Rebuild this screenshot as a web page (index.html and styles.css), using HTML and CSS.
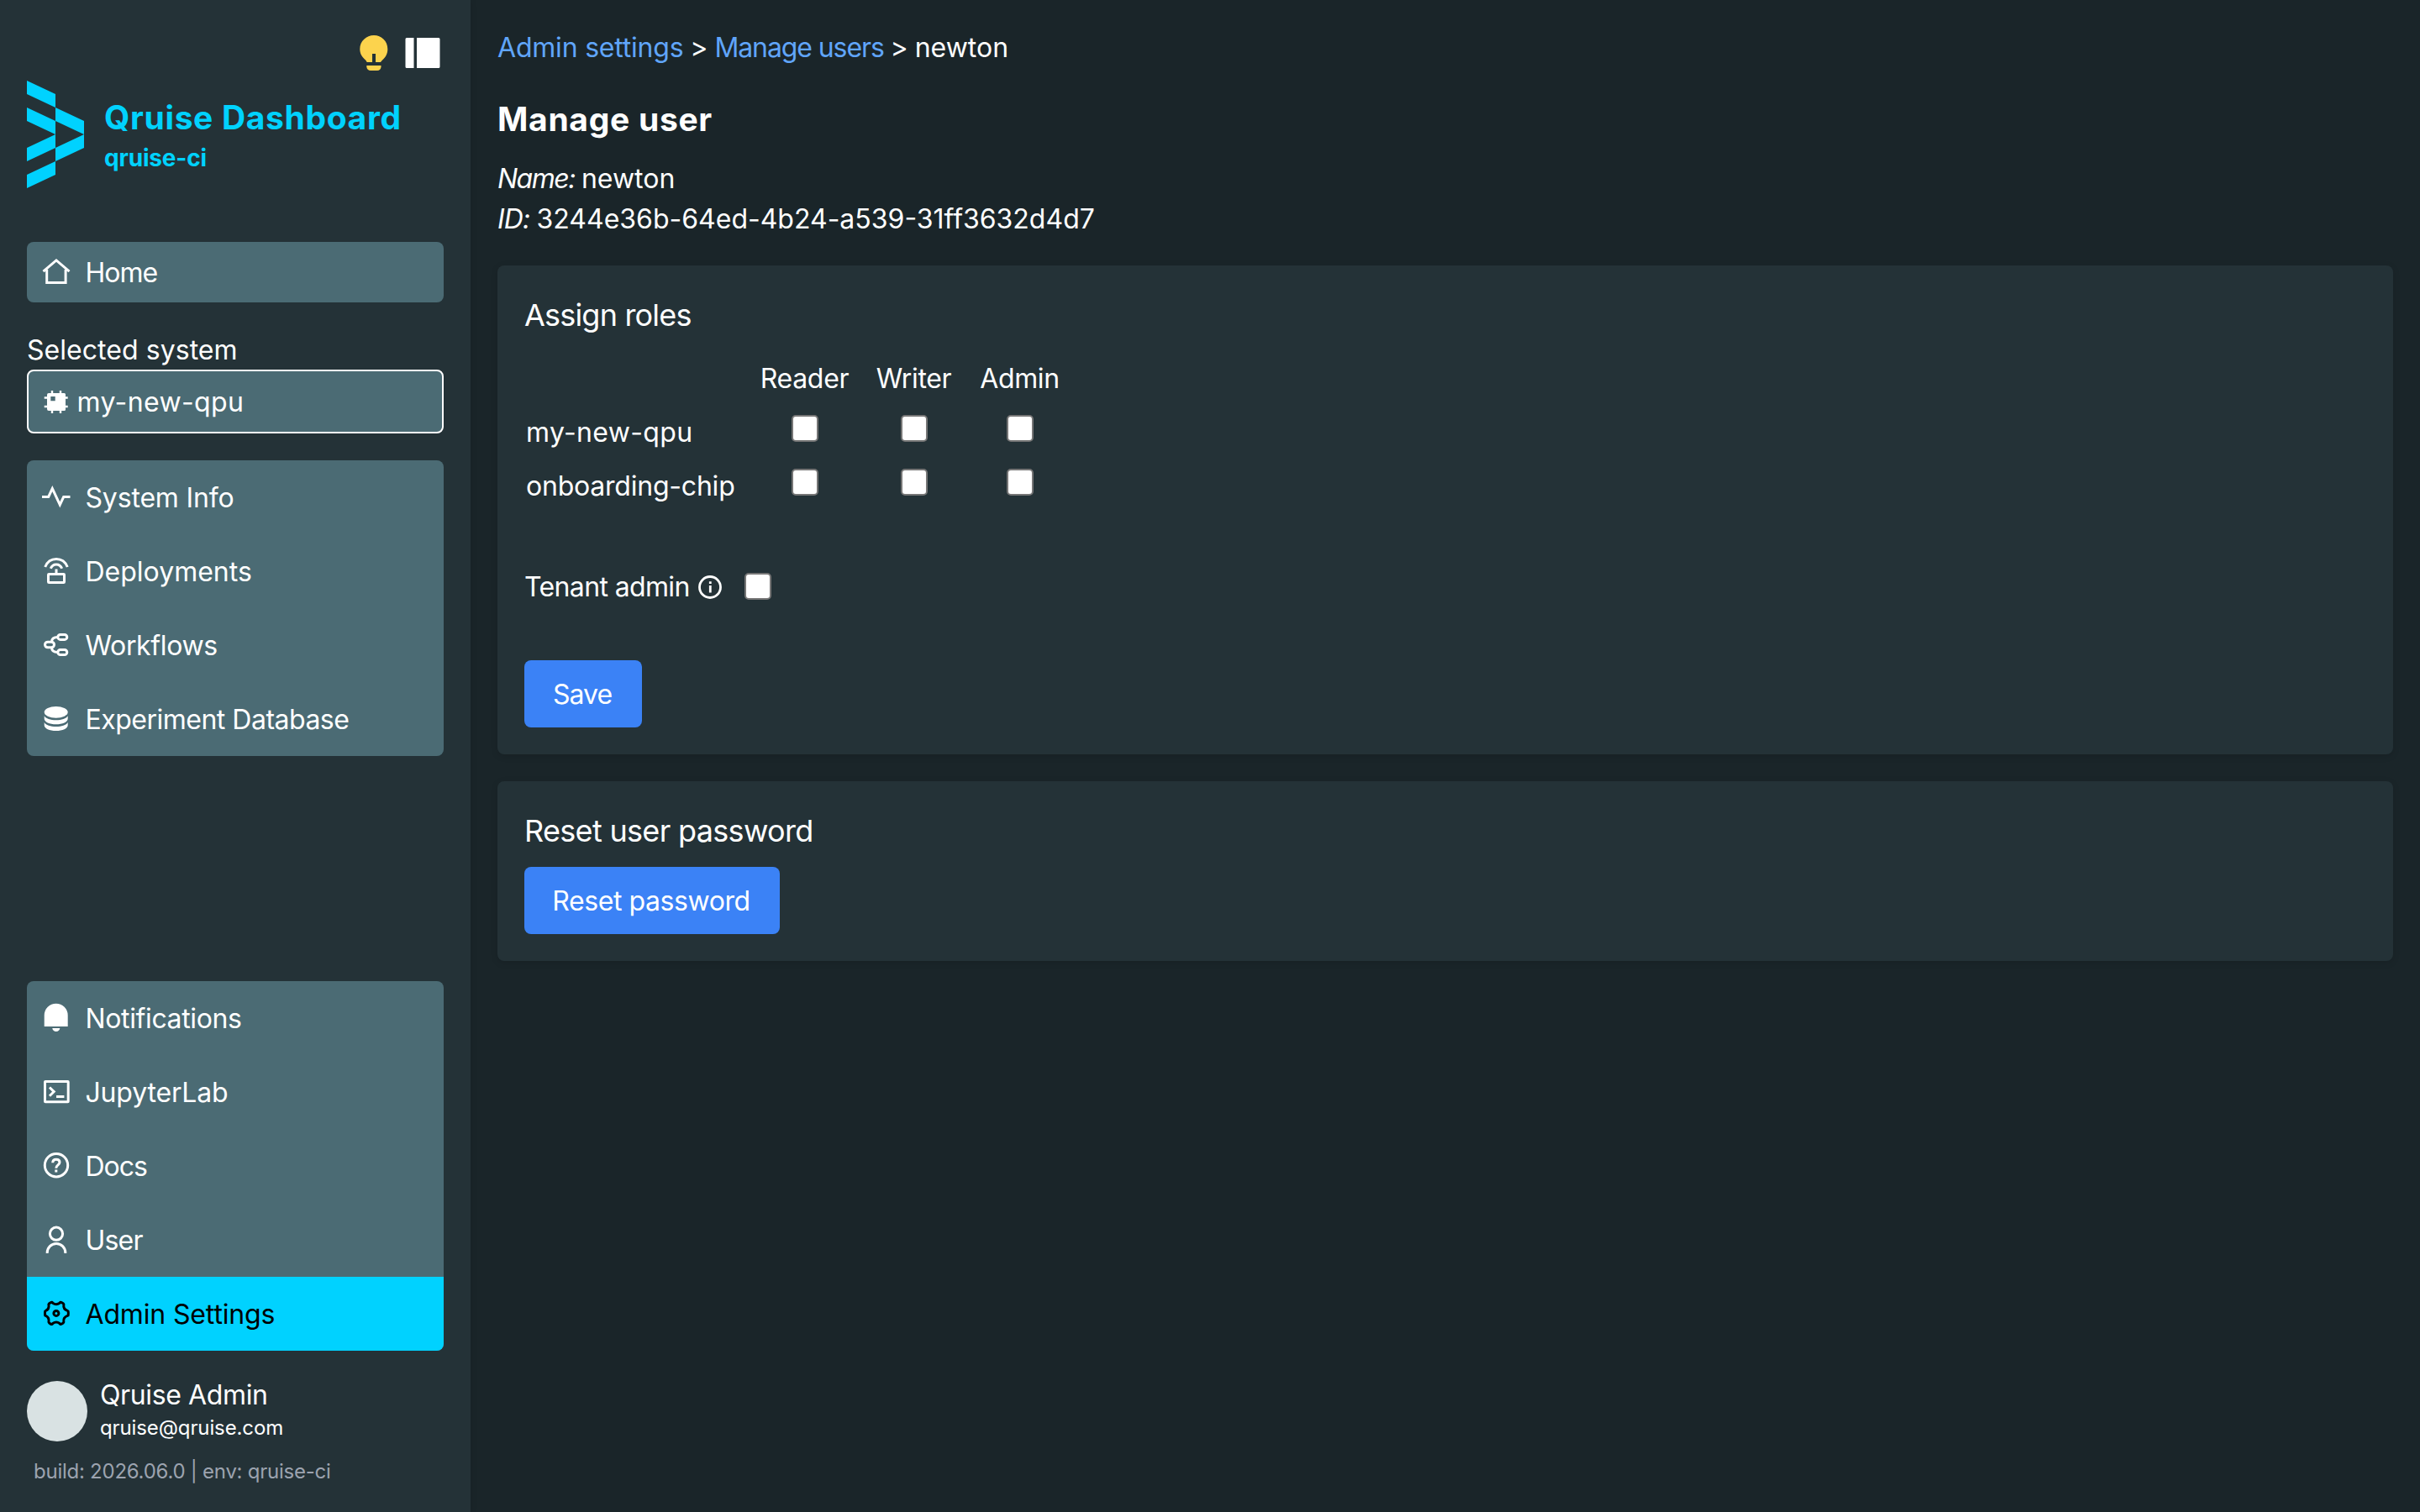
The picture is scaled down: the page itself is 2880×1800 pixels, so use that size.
FILE: index.html
```html
<!DOCTYPE html>
<html lang="en">
<head>
<meta charset="utf-8">
<title>Qruise Dashboard</title>
<link rel="stylesheet" href="styles.css">
</head>
<body>
<div class="app">
  <aside class="sidebar">
    <div class="tools">
      <svg class="bulb" viewBox="0 0 34 42"><path fill-rule="evenodd" d="M17 0C26 0 33.3 7 33.3 16.4c0 6.5-3 9.800-6 12.800-1.200 1.200-2.300 2.800-2.300 2.800H19V22h-4v10H8.600s-.6-1.600-1.800-2.800C3.800 26.200.300 23 .300 16.400.3 7 8 0 17 0zM8.300 36h17.200v1.500a4.500 4.500 0 0 1-4.500 4.500h-8a4.700 4.700 0 0 1-4.700-4.500z"/></svg>
      <svg class="panel" viewBox="0 0 42 36"><path d="M2 0h8.500v36H2a1.500 1.500 0 0 1-1.500-1.500v-33A1.500 1.500 0 0 1 2 0zM14 0h26a1.500 1.500 0 0 1 1.500 1.500v33A1.500 1.500 0 0 1 40 36H14z"/></svg>
    </div>
    <div class="brand">
      <svg class="logo" viewBox="0 0 68 128"><path d="M0 0l34 16v16L0 16zM0 32l34 16v16L0 48zM34 32l34 16v16L34 48zM34 64v16L0 96V80zM68 64v16L34 96V80zM34 96v16L0 128v-16z"/></svg>
      <div class="brand-text">
        <div class="brand-name">Qruise Dashboard</div>
        <div class="brand-env">qruise-ci</div>
      </div>
    </div>

    <a class="nav home">
      <span class="item"><svg class="icon" viewBox="0 0 36 36"><path d="M2.500 17.200L18 3.900l15.500 13.300M6.700 15v15.600h22.400V15"/></svg><span class="t-short">Home</span></span>
    </a>

    <div class="select-label">Selected system</div>
    <div class="select">
      <svg class="icon" viewBox="0 0 36 36"><path class="solid" fill-rule="evenodd" d="M9 8h18.500a1.500 1.500 0 0 1 1.500 1.500V27.500a1.500 1.500 0 0 1-1.500 1.500H9a2 2 0 0 1-2-2V10a2 2 0 0 1 2-2zM11.300 12v5.300h5.400V12z"/><path class="pins" d="M13 5v4M23 5v4M13 28v4M23 28v4M3.700 13.500H8M3.700 24H8M28 13.500h3.700M28 24h3.700"/></svg>
      <span>my-new-qpu</span>
    </div>

    <nav class="nav">
      <a class="item"><svg class="icon" viewBox="0 0 36 36"><path d="M1 17.500h7.700l4.600-10L22.300 27l4.400-9.500h7.800"/></svg><span class="t-info">System Info</span></a>
      <a class="item"><svg class="icon" viewBox="0 0 36 36"><path d="M4.700 13C7.200 7 12.200 3.600 18 3.600S28.800 7 31.300 13M11.300 14.800C12.600 11.500 15 9.900 18 9.900s5.400 1.600 6.700 4.900M18 15.500v5.800"/><rect x="8.500" y="21.500" width="19" height="10" rx=".8"/></svg><span>Deployments</span></a>
      <a class="item"><svg class="icon" viewBox="0 0 36 36"><rect x="4.500" y="14.200" width="11" height="6.600" rx="3.300"/><rect x="19.800" y="5.400" width="11" height="6" rx="3"/><rect x="19.800" y="23.500" width="11" height="6" rx="3"/><path d="M12.500 14c0-4 2.500-5.600 7.300-5.600M12.500 21c0 4 2.500 5.500 7.300 5.500"/></svg><span class="t-flow">Workflows</span></a>
      <a class="item"><svg class="icon" viewBox="0 0 36 36"><g class="solid"><ellipse cx="17.700" cy="9.800" rx="14" ry="6.900"/><path d="M3.700 14.300c2 3.300 7.300 5 14 5s12-1.700 14-5v3.200c0 4-6.300 6.800-14 6.800s-14-2.800-14-6.800z"/><path d="M3.700 22c2 3.300 7.300 5 14 5s12-1.700 14-5v3.200c0 4-6.300 6.800-14 6.800s-14-2.800-14-6.800z"/></g></svg><span class="t-data">Experiment Database</span></a>
    </nav>

    <div class="bottom">
      <nav class="nav">
        <a class="item"><svg class="icon" viewBox="0 0 36 36"><path class="solid" d="M3.700 28V14.700a14 14 0 0 1 28 0V28zM13.300 30h9a4.500 4 0 0 1-9 0z"/></svg><span class="t-mid">Notifications</span></a>
        <a class="item"><svg class="icon" viewBox="0 0 36 36"><rect x="4.500" y="5.500" width="27.700" height="24.300" rx=".5"/><path d="M10 12.500l5.200 5.100-5.200 5.100M18 23.500h9.400"/></svg><span class="t-info">JupyterLab</span></a>
        <a class="item"><svg class="icon" viewBox="0 0 36 36"><circle cx="18" cy="17.200" r="13.700"/><path d="M13.700 14.300c.1-2.400 1.700-4 4.200-4 2.400 0 4.100 1.400 4.100 3.500 0 3.200-4.200 3-4.200 6.900M17.800 22.500v3"/></svg><span class="t-short">Docs</span></a>
        <a class="item"><svg class="icon" viewBox="0 0 36 36"><circle cx="18" cy="10.700" r="7.600"/><path d="M7.200 34v-.7a10.800 10.800 0 0 1 21.600 0v.7"/></svg><span class="t-user">User</span></a>
        <a class="item active"><svg class="icon" viewBox="0 0 36 36"><path stroke-linejoin="round" d="M11.200 4.700q2-1.200 2.600.6Q18 8.300 22 5.300q.6-1.800 2.600-.6l1.600 1q1.200 1 .6 2.200-.6 4.600 4.500 6.500 1.200.4 1 1.800v2.400q.2 1.400-1 1.800-5.100 1.900-4.500 6.500.6 1.200-.6 2.200l-1.600 1q-2 1.200-2.600-.6-4-3-8.200 0-.6 1.800-2.600.6l-1.600-1Q8.400 28.100 9 26.900q.6-4.600-3.600-6.500-1.100-.4-.9-1.800v-2.400q-.2-1.400.9-1.800Q9.600 12.500 9 7.900 8.400 6.700 9.600 5.700z"/><circle cx="17.900" cy="17.400" r="3"/></svg><span class="t-admin">Admin Settings</span></a>
      </nav>
      <div class="account">
        <div class="avatar"></div>
        <div>
          <div class="account-name">Qruise Admin</div>
          <div class="account-mail">qruise@qruise.com</div>
        </div>
      </div>
      <div class="build">build: 2026.06.0 | env: qruise-ci</div>
    </div>
  </aside>

  <main class="main">
    <div class="crumbs">
      <a class="crumb-first">Admin settings</a><span class="sep">&gt;</span><a class="crumb-second">Manage users</a><span class="sep">&gt;</span><span>newton</span>
    </div>
    <h1>Manage user</h1>
    <div class="facts">
      <div class="fact"><i class="t-name">Name:</i><span>newton</span></div>
      <div class="fact"><i class="t-id">ID:</i><span>3244e36b-64ed-4b24-a539-31ff3632d4d7</span></div>
    </div>

    <section class="card">
      <h2 class="t-roles">Assign roles</h2>
      <div class="roles">
        <span></span><span class="col">Reader</span><span class="col">Writer</span><span class="col">Admin</span>
        <span class="row t-qpu">my-new-qpu</span><input type="checkbox"><input type="checkbox"><input type="checkbox">
        <span class="row">onboarding-chip</span><input type="checkbox"><input type="checkbox"><input type="checkbox">
      </div>
      <div class="tenant">
        <span class="tenant-label">Tenant admin</span>
        <svg class="info" viewBox="0 0 28 28"><circle cx="14" cy="14" r="12.500"/><path d="M14.300 12v8.500M14.300 7.300v2.800"/></svg>
        <input type="checkbox">
      </div>
      <button class="save">Save</button>
    </section>

    <section class="card">
      <h2>Reset user password</h2>
      <button class="reset">Reset password</button>
    </section>
  </main>
</div>
</body>
</html>
```
FILE: styles.css
```css
* { box-sizing: border-box; }
body {
  margin: 0;
  background: #1a2529;
  color: #fff;
  font: 400 32px/48px Inter, "Open Sans", sans-serif;
  white-space: nowrap;
}
.app { display: flex; height: 1800px; }

/* Sidebar */
.sidebar {
  display: flex;
  flex-direction: column;
  width: 560px;
  padding: 32px 32px 30px;
  background: #243237;
  box-shadow: 0 2px 8px rgba(0, 0, 0, .12);
}
.tools {
  display: flex;
  justify-content: flex-end;
  align-items: center;
  gap: 20px;
  height: 64px;
  padding-right: 4px;
}
.bulb { width: 34px; height: 42px; fill: #fcd34d; margin-top: -2px; }
.panel { width: 42px; height: 36px; fill: #fff; margin-top: -2px; }
.brand { display: flex; align-items: center; gap: 24px; height: 128px; color: #00d2ff; font-weight: 700; }
.logo { width: 68px; height: 128px; fill: currentColor; }
.brand-text { padding-top: 7px; }
.brand-name { font-size: 39px; letter-spacing: .65px; }
.brand-env { font-size: 28px; letter-spacing: -.2px; }

.nav { display: flex; flex-direction: column; border-radius: 8px; background: #4b6b74; overflow: hidden; }
.item { display: flex; align-items: center; gap: 17px; height: 88px; padding-left: 16.500px; }
.item span, .select span { padding-top: 2px; }
.home { margin-top: 64px; }
.home .item { height: 72px; }
.active { background: #00d2ff; color: #000; }
.icon {
  flex: none;
  width: 36px;
  height: 36px;
  fill: none;
  stroke: currentColor;
  stroke-width: 3;
}
.solid { fill: currentColor; stroke: none; }
.pins { stroke-width: 2.4; }
.t-short { letter-spacing: -1px; }
.t-user { letter-spacing: -.8px; }
.t-info { letter-spacing: -.17px; }
.t-flow { letter-spacing: -.35px; }
.t-data { letter-spacing: -.5px; }
.t-mid { letter-spacing: -.37px; }
.t-admin { letter-spacing: -.15px; }

.select-label { margin-top: 32px; padding-top: 2px; line-height: 46px; letter-spacing: .05px; }
.select {
  display: flex;
  align-items: center;
  gap: 7px;
  height: 76px;
  margin-bottom: 32px;
  padding-left: 14.500px;
  border: 2px solid #fff;
  border-radius: 8px;
  background: #4b6b74;
  letter-spacing: .38px;
}

.bottom { margin-top: auto; }
.account { display: flex; align-items: flex-end; gap: 15px; margin-top: 31px; }
.avatar { width: 72px; height: 72px; border-radius: 50%; background: #d9e2e3; }
.account-name { line-height: 44px; letter-spacing: -.38px; }
.account-mail { font-size: 24px; line-height: 33px; letter-spacing: -.11px; }
.build { margin-top: 18px; padding-left: 8px; font-size: 24px; line-height: 36px; letter-spacing: -.25px; color: #9ca3af; }

/* Page content */
.main { flex: 1; padding: 32px; }
.crumbs { display: flex; line-height: 49px; }
.crumbs a { color: #60a5fa; }
.crumb-first { letter-spacing: -.2px; }
.crumb-second { letter-spacing: -1.100px; }
.sep { width: 37px; text-align: center; }
h1 { margin: 32px 0 19px; font-size: 39px; line-height: 57px; font-weight: 700; letter-spacing: .7px; }
.facts { margin-bottom: 31px; }
.fact { display: flex; gap: 8px; }
.t-name { letter-spacing: -1.500px; }
.t-id { letter-spacing: -.8px; }

.card {
  margin-bottom: 32px;
  padding: 32px;
  border-radius: 8px;
  background: #243237;
  box-shadow: 0 2px 8px rgba(0, 0, 0, .12);
}
h2 { margin: 0 0 16px; font-size: 36px; line-height: 54px; font-weight: 400; letter-spacing: -.68px; }
.t-roles { letter-spacing: -.8px; }
.roles {
  display: grid;
  grid-template-columns: 266px 136px 124px 128px;
  grid-auto-rows: 64px;
  line-height: 66px;
  justify-items: center;
}
.col { letter-spacing: -.33px; margin-left: -1px; }
.row { justify-self: start; padding-left: 2px; letter-spacing: -.22px; }
.t-qpu { letter-spacing: .35px; }
input {
  appearance: none;
  width: 32px;
  height: 32px;
  margin: 0;
  border: 2px solid #767676;
  border-radius: 5px;
  background: #fff;
}
.roles input { margin: 12px 1px 0 0; }
.roles input:nth-child(4n + 2) { margin-right: 0; }
.tenant { display: flex; align-items: center; height: 48px; margin: 64px 0; letter-spacing: -.63px; }
.tenant-label { padding-top: 1px; }
.info { width: 28px; height: 28px; margin: 1px 27px 0 10px; fill: none; stroke: #fff; stroke-width: 2.800; }
button {
  display: block;
  height: 80px;
  padding: 2px 2px 0 0;
  border: 0;
  border-radius: 8px;
  background: #3b82f6;
  color: #fff;
  font: inherit;
}
.save { width: 140px; letter-spacing: -.96px; }
.reset { width: 304px; letter-spacing: -.41px; }
```
